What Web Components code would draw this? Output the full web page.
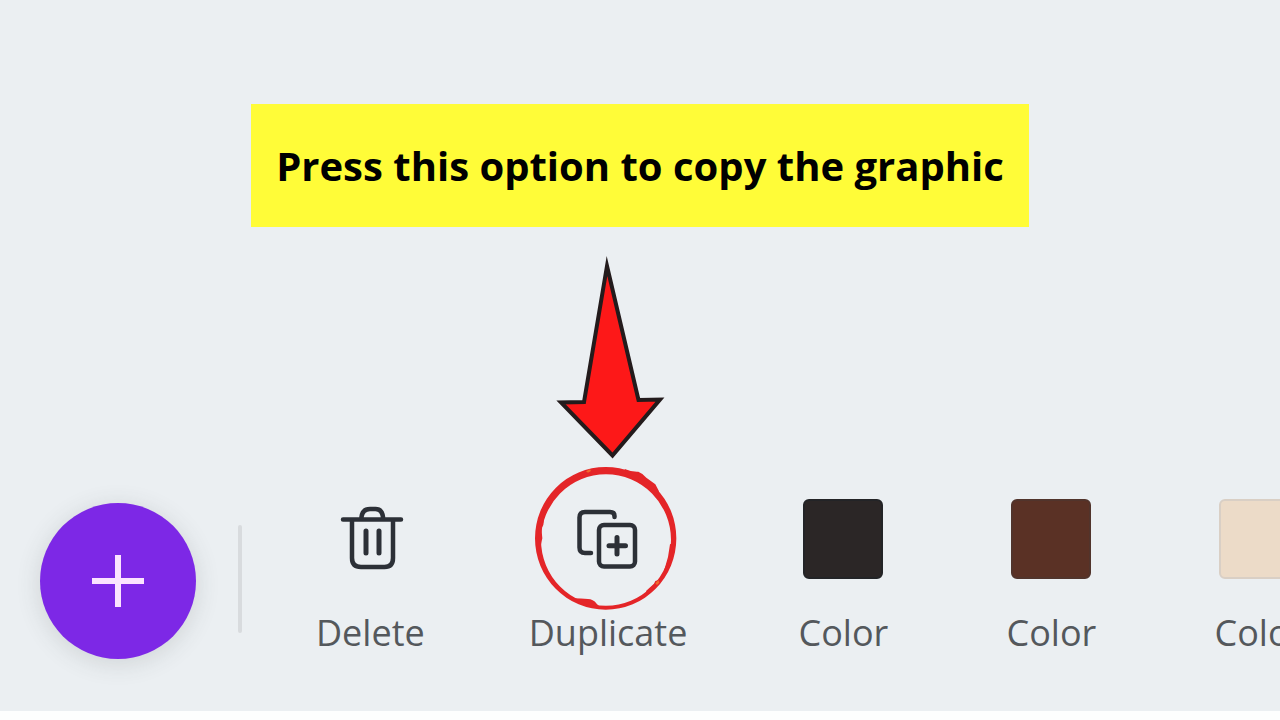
<!DOCTYPE html>
<html lang="en">
<head>
<meta charset="utf-8">
<meta name="viewport" content="width=device-width, initial-scale=1">
<title>Duplicate a graphic</title>
<style>
  body { margin: 0; font-family: "Open Sans", "Noto Sans", sans-serif; background: #ebeff2; }
</style>
</head>
<body>
<tutorial-page>
  <callout-banner slot="callout">Press this option to copy the graphic</callout-banner>
  <tool-bar slot="toolbar">
    <add-button></add-button>
    <tool-divider></tool-divider>
    <tool-list>
      <tool-item label="Delete"><trash-icon></trash-icon></tool-item>
      <tool-item label="Duplicate"><duplicate-icon></duplicate-icon><pointer-mark></pointer-mark></tool-item>
      <tool-item label="Color"><color-swatch style="--fill:#2b2626;--edge:#232427"></color-swatch></tool-item>
      <tool-item label="Color"><color-swatch style="--fill:#5a3125;--edge:#51342c"></color-swatch></tool-item>
      <tool-item label="Color"><color-swatch style="--fill:#ecdbc8;--edge:#d9cfc5"></color-swatch></tool-item>
    </tool-list>
  </tool-bar>
</tutorial-page>
<script>
  function element(name, html, setup) {
    const template = document.createElement('template');
    template.innerHTML = html;
    customElements.define(name, class extends HTMLElement {
      constructor() {
        super();
        this.attachShadow({ mode: 'open' }).append(template.content.cloneNode(true));
      }
      connectedCallback() { if (setup) setup(this, this.shadowRoot); }
    });
  }

  element('tutorial-page', `
    <style>
      :host { display: flex; flex-direction: column; justify-content: space-between; min-height: 100vh; box-sizing: border-box; border-bottom: 9px solid #fdfefe; background: #ebeff2; }
      header { display: flex; justify-content: center; padding-top: 104px; }
    </style>
    <header><slot name="callout"></slot></header>
    <main><slot name="toolbar"></slot></main>`);

  element('callout-banner', `
    <style>
      :host { display: block; padding: 34px 25px; background: #fffc38; color: #000; }
      h1 { margin: 0; font-size: 40px; line-height: 55px; font-weight: 700; text-align: center; }
    </style>
    <h1><slot></slot></h1>`);

  element('tool-bar', `
    <style>
      :host { display: flex; align-items: flex-end; padding: 0 0 52px 40px; overflow-x: clip; }
    </style>
    <slot></slot>`);

  element('tool-list', `
    <style>
      :host { display: flex; gap: 100px; flex: none; margin-left: 72px; }
    </style>
    <slot></slot>`);

  element('tool-divider', `
    <style>
      :host { display: block; flex: none; align-self: center; width: 4px; height: 108px; margin-left: 42px; border-radius: 2px; background: #d8dbde; }
    </style>`);

  element('add-button', `
    <style>
      :host { display: block; flex: none; }
      button { display: grid; place-items: center; width: 156px; height: 156px; padding: 0; border: 0; border-radius: 50%; background: #7d28e6; box-shadow: 0 4px 24px rgba(60, 70, 70, .16); cursor: pointer; }
    </style>
    <button type="button" aria-label="Add">
      <svg width="52" height="52" viewBox="0 0 52 52" fill="none" stroke="#fbe3ff" stroke-width="6" aria-hidden="true"><path d="M26 0V52M0 26H52"/></svg>
    </button>`);

  element('tool-item', `
    <style>
      :host { display: block; flex: none; }
      button { display: flex; flex-direction: column; align-items: center; gap: 28px; min-width: 108px; padding: 0 2px; border: 0; background: none; font: inherit; font-size: 36px; line-height: 52px; color: #54585c; cursor: pointer; }
      .icon { position: relative; display: block; width: 80px; height: 80px; }
    </style>
    <button type="button"><span class="icon"><slot></slot></span><span class="label"></span></button>`,
    (host, root) => { root.querySelector('.label').textContent = host.getAttribute('label'); });

  element('color-swatch', `
    <style>
      :host { display: block; box-sizing: border-box; width: 80px; height: 80px; border: 2px solid var(--edge); border-radius: 6px; background: var(--fill); }
    </style>`);

  element('trash-icon', `
    <style>
      :host, svg { display: block; }
    </style>
    <svg width="80" height="80" viewBox="0 0 80 80" fill="none" stroke="#2c3037" stroke-width="4.5" aria-hidden="true">
      <path d="M13 20.500H71M22 21V59Q22 68 31 68H54.500Q63 68 63 59V21M31.500 20V18Q32.500 10 40 10H45.500Q52 10 53 18V20" stroke-linecap="round"/>
      <path d="M36 32V54M49 32V54" stroke-width="5" stroke-linecap="round"/>
    </svg>`);

  element('duplicate-icon', `
    <style>
      :host, svg { display: block; }
    </style>
    <svg width="80" height="80" viewBox="0 0 80 80" fill="none" stroke="#2c3037" stroke-width="4.5" aria-hidden="true">
      <path d="M46.500 18V17Q46.500 13 42 13H17Q11.500 13 11.500 18.500V48.500Q11.500 54 17 54H23" stroke-linecap="round"/>
      <rect x="31" y="26" width="36" height="41.5" rx="5"/>
      <path d="M49 38.500V55M41 46.800H57.500" stroke-width="5" stroke-linecap="round"/>
    </svg>`);

  /* Hand-drawn ring and arrow laid over the item they point at. */
  element('pointer-mark', `
    <style>
      :host { position: absolute; inset: 0; pointer-events: none; }
      svg { position: absolute; overflow: visible; }
      .ring { inset: -42px; }
      .arrow { left: -20px; bottom: calc(100% + 40px); }
    </style>
    <svg class="arrow" width="120" height="208" viewBox="0 0 120 208" aria-hidden="true">
      <path d="M59 15L90.500 149L112 148.500L64.500 204.500L13 151.500L36 151Z" fill="#fd1818" stroke="#231b1c" stroke-width="4" stroke-miterlimit="12"/>
    </svg>
    <svg class="ring" width="164" height="164" viewBox="0 0 492 492" aria-hidden="true">
      <g fill="#e42528">
        <path fill-rule="evenodd" d="M27 244A212 214 0 0 1 451 244A212 214 0 0 1 27 244ZM45 249A195 197 0 0 0 435 249A195 197 0 0 0 45 249Z"/>
        <path d="M296 36Q316 45 337 44Q352 50 361 62L388 82L399 103L391 117L372 96L350 83L324 68L300 58Z"/>
        <path d="M140 424Q166 424 186 426Q201 426 212 440L222 450L170 442Z"/>
        <path d="M40 180L55 176L52 204L46 214L49 244L45 262L38 250ZM432 262L441 258L438 296L428 306L424 330L414 342L426 300ZM360 402L384 380L388 372L400 368L388 392L364 412Z"/>
      </g>
      <path d="M180 43L192 37L195 42L186 47ZM388 379L397 369L400 377L393 384Z" fill="#f06a2c"/>
    </svg>`);
</script>
</body>
</html>
